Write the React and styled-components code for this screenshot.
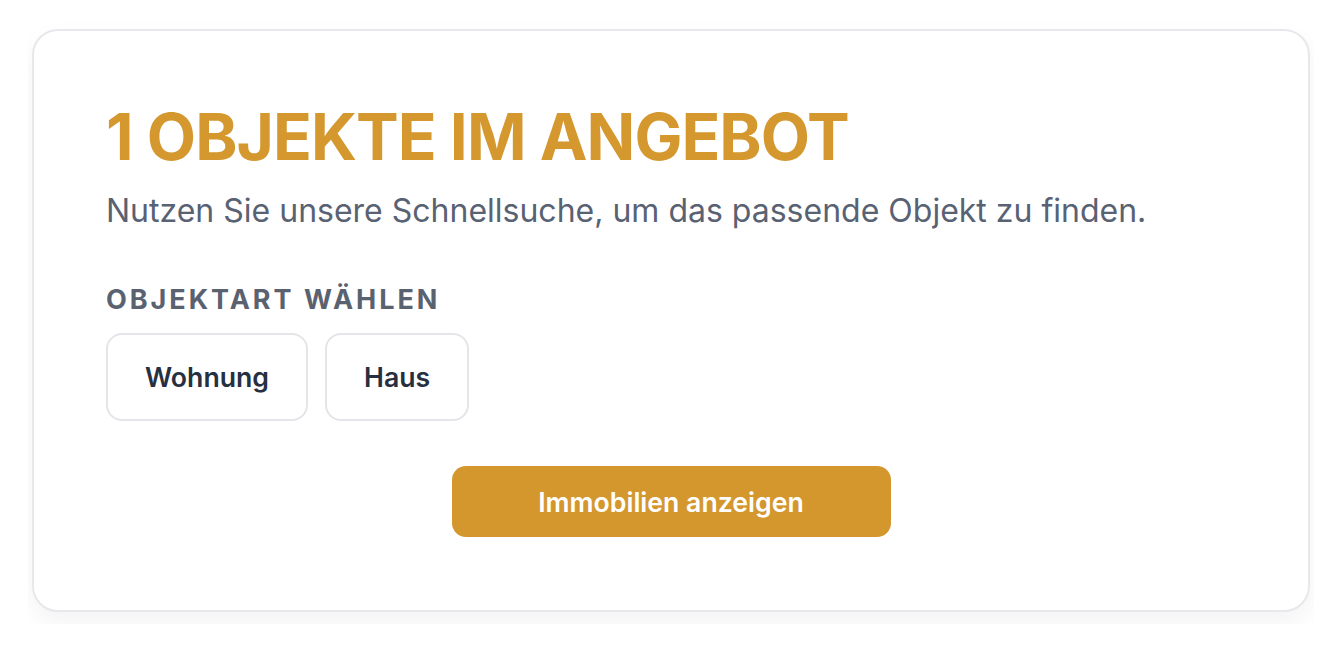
import React, { useState } from "react";
import styled, { createGlobalStyle } from "styled-components";

const GlobalStyle = createGlobalStyle`
  * { box-sizing: border-box; }
  body {
    margin: 0;
    background: #ffffff;
    font-family: Inter, "Noto Sans", sans-serif;
  }
`;

const Page = styled.div`
  padding: 21px 28px 29px 28px;
`;

// the wrapper cuts the card's shadow off, like in the original layout
const Clip = styled.div`
  overflow: hidden;
  padding: 8px 4px 12px 4px;
`;

const Card = styled.section`
  background: #fff;
  border: 2px solid #e7e8eb;
  border-radius: 26px;
  box-shadow: 0 10px 25px rgba(0, 0, 0, 0.05);
  padding: 68px 72px 73px 72px;
  display: flex;
  flex-direction: column;
`;

const Title = styled.h1`
  margin: 0;
  color: #d4982f;
  font-size: 64px;
  line-height: 76px;
  font-weight: 700;
  letter-spacing: -0.015em;
  text-transform: uppercase;
`;

const Lead = styled.p`
  margin: 16px 0 0;
  color: #596273;
  font-size: 32px;
  line-height: 40px;
`;

const Label = styled.h2`
  margin: 53px 0 0;
  color: #5a6270;
  font-size: 27px;
  line-height: 32px;
  font-weight: 700;
  letter-spacing: 0.11em;
  text-transform: uppercase;
`;

const Options = styled.div`
  display: flex;
  gap: 17px;
  margin-top: 17px;
`;

const Option = styled.button`
  font-family: inherit;
  height: 88px;
  padding: 0 37px;
  border-radius: 16px;
  border: 2px solid ${(p) => (p.$active ? "#d4982f" : "#e3e5e8")};
  background: #fff;
  color: #273041;
  font-size: 26.67px;
  font-weight: 600;
  cursor: pointer;
`;

const Submit = styled.button`
  align-self: center;
  margin-top: 45px;
  width: 439px;
  height: 71px;
  border: none;
  border-radius: 14px;
  background: #d4972e;
  color: #fff;
  font-family: inherit;
  font-size: 26.67px;
  font-weight: 600;
  cursor: pointer;
`;

export default function App() {
  const [type, setType] = useState(null);
  return (
    <>
      <GlobalStyle />
      <Page>
        <Clip>
          <Card>
            <Title>1 Objekte im Angebot</Title>
            <Lead>Nutzen Sie unsere Schnellsuche, um das passende Objekt zu finden.</Lead>
            <Label>Objektart wählen</Label>
            <Options>
              {["Wohnung", "Haus"].map((t) => (
                <Option key={t} $active={type === t} onClick={() => setType(t)}>
                  {t}
                </Option>
              ))}
            </Options>
            <Submit>Immobilien anzeigen</Submit>
          </Card>
        </Clip>
      </Page>
    </>
  );
}
